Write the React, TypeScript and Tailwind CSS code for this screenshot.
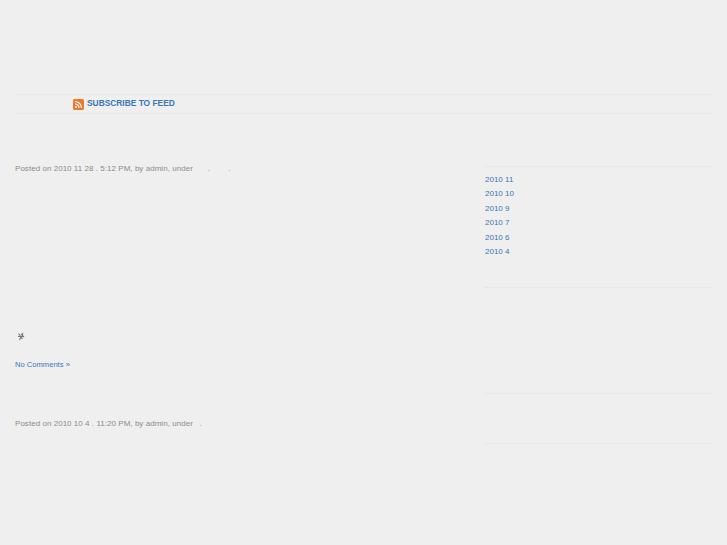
const archives = ["2010 11", "2010 10", "2010 9", "2010 7", "2010 6", "2010 4"];

function RssIcon() {
  return (
    <svg width="11" height="11" viewBox="0 0 11 11" className="shrink-0">
      <rect width="11" height="11" rx="1.5" fill="#ec7a2c" />
      <circle cx="3" cy="8" r="1.1" fill="#fff" />
      <path d="M2 5a4 4 0 0 1 4 4M2 2.500A6.500 6.500 0 0 1 8.500 9" fill="none" stroke="#fff" strokeWidth="1.200" />
    </svg>
  );
}

function Glyph() {
  return (
    <svg width="8" height="9" viewBox="0 0 8 9">
      <path d="M1.500 1.500l4 5.500M6 1L2.500 8M1 4.500h5.500M4 2l3 3" fill="none" stroke="#777" strokeWidth="1.100" />
    </svg>
  );
}

export default function App() {
  return (
    <div className="min-h-[545px] overflow-hidden bg-[#efefef] px-[15px] font-['Liberation_Sans',Arial,sans-serif] text-[8px] tracking-[0.04px] text-[#8c8c8c]">
      <div className="h-[94px]" />
      <div className="flex h-[20px] items-center border-y border-dotted border-[#e2e2e2] pl-[58px]">
        <RssIcon />
        <a className="ml-[3px] mb-[1px] text-[8.400px] font-bold tracking-normal text-[#3a76b8]">SUBSCRIBE TO FEED</a>
      </div>

      <div className="flex justify-between">
        <div className="w-[440px]">
          <p className="mt-[49px] h-[12px] leading-[12px]">
            Posted on 2010 11 28 . 5:12 PM, by admin, under<span className="ml-[15px]">.</span><span className="ml-[18px]">.</span>
          </p>
          <div className="mt-[157px] ml-[2px] flex h-[9px]">
            <Glyph />
          </div>
          <a className="mt-[18px] block h-[12px] text-[7.600px] leading-[12px] tracking-normal text-[#3a76b8]">No Comments »</a>
          <p className="mt-[47px] h-[12px] leading-[12px]">
            Posted on 2010 10 4 . 11:20 PM, by admin, under<span className="ml-[7px]">.</span>
          </p>
        </div>

        <div className="w-[227px] pt-[52px]">
          <div className="border-t border-dotted border-[#e2e2e2] pt-[6px] pb-[28px]">
            {archives.map((a) => (
              <a key={a} className="block h-[14.400px] leading-[14.400px] tracking-normal text-[#3a76b8]">{a}</a>
            ))}
          </div>
          <div className="h-[106px] border-t border-dotted border-[#e2e2e2]" />
          <div className="h-[50px] border-t border-dotted border-[#e2e2e2]" />
          <div className="border-t border-dotted border-[#e2e2e2]" />
        </div>
      </div>
    </div>
  );
}
